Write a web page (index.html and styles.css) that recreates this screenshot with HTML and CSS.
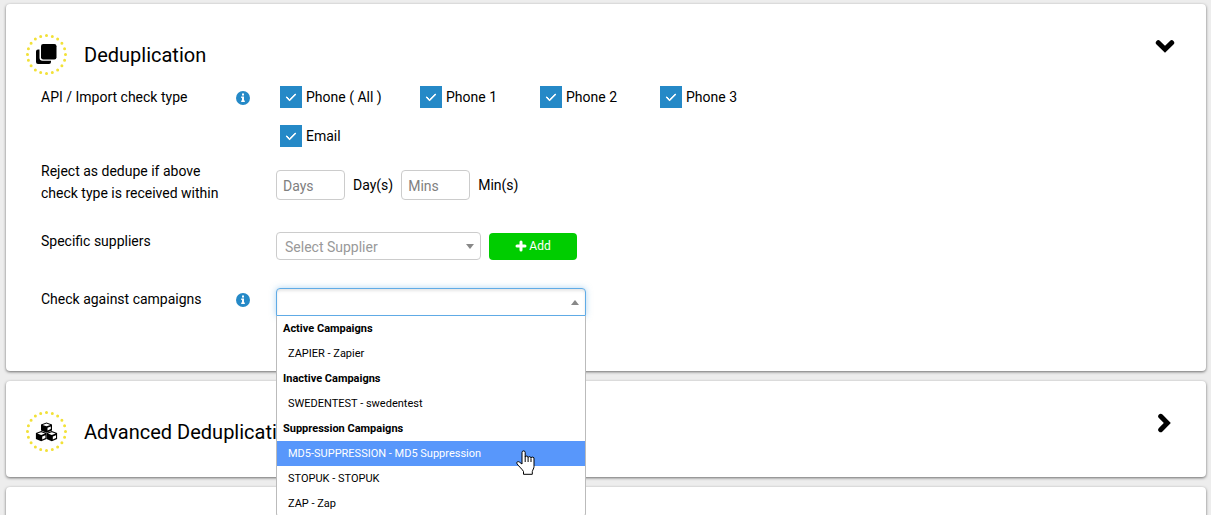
FILE: index.html
```html
<!DOCTYPE html>
<html lang="en">
<head>
    <meta charset="UTF-8">
    <meta name="viewport" content="width=device-width, initial-scale=1.0">
    <title>Campaign - Deduplication</title>
    <link rel="stylesheet" href="styles.css">
</head>
<body>
    <main class="page">

        <section class="panel">
            <header class="panel-header">
                <svg class="panel-icon" viewBox="0 0 41 41" aria-hidden="true">
                    <circle class="dots" cx="20.5" cy="20.5" r="19" pathLength="20" />
                    <path d="M12 15.5a2 2 0 0 0-2 2V28a2 2 0 0 0 2 2h11a2 2 0 0 0 2-2v-1.300H16.500a3 3 0 0 1-3-3v-8.200z" />
                    <rect x="15" y="10" width="15.500" height="15.500" rx="2.200" />
                </svg>
                <h2>Deduplication</h2>
                <button class="toggle" type="button" aria-label="Collapse">
                    <svg viewBox="0 0 20 20"><path d="M3.300 6.700 10 13.300l6.700-6.600" /></svg>
                </button>
            </header>

            <div class="form-row checks-row">
                <span class="row-label" id="check-type">API / Import check type</span>
                <svg class="info" viewBox="0 0 14 14" aria-hidden="true">
                    <circle cx="7" cy="7" r="7" />
                    <path d="M6 2.600h2v2H6zM5.200 5.600H8v4h.8V11H5.200V9.600H6V7h-.8z" />
                </svg>
                <div class="checks" role="group" aria-labelledby="check-type">
                    <label class="check"><input type="checkbox" checked> Phone ( All )</label>
                    <label class="check"><input type="checkbox" checked> Phone 1</label>
                    <label class="check"><input type="checkbox" checked> Phone 2</label>
                    <label class="check"><input type="checkbox" checked> Phone 3</label>
                    <label class="check"><input type="checkbox" checked> Email</label>
                </div>
            </div>

            <div class="form-row within-row">
                <span class="row-label">Reject as dedupe if above check type is received within</span>
                <div class="controls">
                    <input class="number" id="days" type="text" placeholder="Days">
                    <label for="days">Day(s)</label>
                    <input class="number" id="mins" type="text" placeholder="Mins">
                    <label for="mins">Min(s)</label>
                </div>
            </div>

            <div class="form-row supplier-row">
                <label class="row-label" for="supplier">Specific suppliers</label>
                <div class="controls">
                    <div class="select-box supplier">
                        <select id="supplier">
                            <option>Select Supplier</option>
                        </select>
                    </div>
                    <button class="add-btn" type="button">
                        <svg viewBox="0 0 12 12" aria-hidden="true"><path d="M6 2v8M2 6h8" /></svg>
                        Add
                    </button>
                </div>
            </div>

            <div class="form-row campaign-row">
                <label class="row-label" for="campaigns">Check against campaigns</label>
                <svg class="info" viewBox="0 0 14 14" aria-hidden="true">
                    <circle cx="7" cy="7" r="7" />
                    <path d="M6 2.600h2v2H6zM5.200 5.600H8v4h.8V11H5.200V9.600H6V7h-.8z" />
                </svg>
                <div class="controls">
                    <div class="select-box campaigns open">
                        <select id="campaigns">
                            <option></option>
                        </select>
                        <ul class="dropdown" role="listbox" aria-label="Campaigns">
                            <li class="group">Active Campaigns</li>
                            <li role="option">ZAPIER - Zapier</li>
                            <li class="group">Inactive Campaigns</li>
                            <li role="option">SWEDENTEST - swedentest</li>
                            <li class="group">Suppression Campaigns</li>
                            <li class="highlighted" role="option">
                                MD5-SUPPRESSION - MD5 Suppression
                                <svg class="pointer" viewBox="0 0 19 25" aria-hidden="true">
                                    <path d="M6 14V2.500a1.600 1.600 0 0 1 3.200 0V7a1.500 1.500 0 0 1 2.900.6 1.500 1.500 0 0 1 2.900.6 1.500 1.500 0 0 1 3 .8v7.500c0 2-1.200 3-1.700 5v2.800H7.500v-2.800C6.500 19.500 3 16.500 1 13.800c-.8-1.800.8-2.800 2.300-1.800z" />
                                    <path d="M9.200 6.500v5.500M12.100 7.500v4.500M15 8.500v3.500" />
                                </svg>
                            </li>
                            <li role="option">STOPUK - STOPUK</li>
                            <li role="option">ZAP - Zap</li>
                        </ul>
                    </div>
                </div>
            </div>
        </section>

        <section class="panel">
            <header class="panel-header">
                <svg class="panel-icon" viewBox="0 0 41 41" aria-hidden="true">
                    <circle class="dots" cx="20.5" cy="20.5" r="19" pathLength="20" />
                    <path d="M20.500 11.500 26 13.400V19.500L20.500 21.700 15 19.500v-6.100z" />
                    <path d="M15.200 20 20.500 22V28l-5.300 2.200L9.900 28v-6z" />
                    <path d="M25.800 20l5.300 2V28l-5.300 2.200-5.300-2.200v-6z" />
                    <path class="cube-lines" d="M16.600 13.900l3.900 1.400 3.900-1.400-3.900-1.300zM11.300 22.500l3.900 1.400 3.900-1.400-3.900-1.300zM21.900 22.500l3.900 1.400 3.900-1.400-3.900-1.300zM21.500 16.800v2.600l3.300-1.400v-2.500zM16.200 25.400v3l3.200-1.400v-2.800zM26.800 25.400v3l3.200-1.400v-2.800z" />
                </svg>
                <h2>Advanced Deduplication</h2>
                <button class="toggle" type="button" aria-label="Expand">
                    <svg viewBox="0 0 20 20"><path d="M5.700 3.300 12.300 10l-6.600 6.700" /></svg>
                </button>
            </header>
        </section>

        <section class="panel"></section>

    </main>
</body>
</html>
```

FILE: styles.css
```css
* {
    margin: 0;
    padding: 0;
    box-sizing: border-box;
}

body {
    font-family: Roboto, Arial, sans-serif;
    font-size: 14px;
    line-height: 22px;
    color: #000;
    background-color: #ededed;
}

input, select, button {
    font-family: inherit;
    font-size: 14px;
}

.page {
    display: flex;
    flex-direction: column;
    gap: 10px;
    height: 100vh;
    padding: 4px 5px 0 6px;
    overflow: hidden;
}

/* Panels */
.panel {
    flex-shrink: 0;
    min-height: 96px;
    padding: 30px 20px 25px;
    background-color: #fff;
    border-radius: 4px;
    box-shadow: 0 1px 3px rgba(0, 0, 0, 0.55);
}

.panel-header {
    display: flex;
    align-items: center;
    margin-bottom: 11px;
}

.panel:nth-child(2) .panel-header {
    margin-bottom: 0;
}

.panel-icon {
    width: 41px;
    height: 41px;
    margin-right: 17px;
}

.dots {
    fill: none;
    stroke: #f2e138;
    stroke-width: 3;
    stroke-linecap: round;
    stroke-dasharray: 0 1;
}

.cube-lines {
    fill: #fff;
}

.panel-header h2 {
    flex: 1;
    font-size: 20px;
    font-weight: 400;
    line-height: 24px;
}

.toggle {
    width: 20px;
    height: 20px;
    margin: 0 11px 18px 0;
    background: none;
    border: none;
    cursor: pointer;
}

.toggle svg {
    display: block;
    fill: none;
    stroke: #000;
    stroke-width: 5;
    stroke-linecap: round;
}

/* Form rows */
.form-row {
    display: grid;
    grid-template-columns: 195px 40px 1fr;
    align-items: start;
    padding-left: 15px;
}

.row-label {
    padding-right: 10px;
}

.info {
    width: 14px;
    height: 14px;
    margin-top: 5px;
    fill: #2589c7;
}

.info path {
    fill: #fff;
}

.controls {
    grid-column: 3;
    display: flex;
    align-items: center;
    gap: 8px;
}

.checks-row {
    min-height: 74px;
}

.within-row {
    min-height: 70px;
}

.within-row .controls {
    padding-top: 10px;
}

.supplier-row {
    min-height: 58px;
}

.supplier-row .controls {
    padding-top: 2px;
}

.campaign-row {
    min-height: 58px;
}

/* Checkboxes */
.checks {
    display: grid;
    grid-template-columns: 140px 120px 120px 120px;
    row-gap: 17px;
    padding-left: 4px;
}

.check {
    display: flex;
    align-items: center;
    gap: 4px;
}

.check input {
    appearance: none;
    display: grid;
    place-items: center;
    width: 22px;
    height: 22px;
    background-color: #2589c7;
}

.check input:checked::after {
    content: "";
    width: 8px;
    height: 4px;
    margin-bottom: 3px;
    border-left: 2px solid #fff;
    border-bottom: 2px solid #fff;
    border-radius: 1px;
    transform: rotate(-45deg);
}

/* Inputs */
.number {
    width: 69px;
    height: 30px;
    padding: 2px 6px 0;
    border: 1px solid #ccc;
    border-radius: 4px;
}

.number::placeholder {
    color: #808080;
}

.select-box {
    position: relative;
    height: 28px;
}

.select-box select {
    appearance: none;
    display: block;
    width: 100%;
    height: 28px;
    padding: 2px 20px 0 8px;
    color: #999;
    background-color: #fff;
    border: 1px solid #ccc;
    border-radius: 4px;
}

.select-box::after {
    content: "";
    position: absolute;
    top: 12px;
    right: 7px;
    border: 4px solid transparent;
    border-top: 5px solid #888;
    border-bottom: none;
}

.supplier {
    width: 205px;
}

.campaigns {
    width: 310px;
}

.open select {
    border-color: #5fabe6;
    border-radius: 4px 4px 0 0;
    box-shadow: 0 0 6px rgba(95, 171, 230, 0.5), inset 0 2px 3px rgba(0, 0, 0, 0.1);
}

.open::after {
    border-top: none;
    border-bottom: 5px solid #888;
}

.add-btn {
    display: flex;
    align-items: center;
    justify-content: center;
    gap: 2px;
    width: 88px;
    height: 27px;
    font-size: 12px;
    color: #fff;
    background-color: #00cd00;
    border: none;
    border-radius: 4px;
    cursor: pointer;
}

.add-btn svg {
    width: 12px;
    height: 12px;
    stroke: #fff;
    stroke-width: 3;
    stroke-linecap: round;
}

/* Campaign dropdown */
.dropdown {
    position: absolute;
    top: 28px;
    left: 0;
    z-index: 10;
    width: 100%;
    font-size: 11px;
    line-height: 25px;
    list-style: none;
    background-color: #fff;
    border: 1px solid #bbb;
    border-top: none;
    border-radius: 0 0 4px 4px;
}

.dropdown li {
    position: relative;
    height: 25px;
    padding-left: 11px;
}

.dropdown .group {
    padding-left: 6px;
    font-weight: 700;
}

.dropdown .highlighted {
    color: #fff;
    background-color: #5897fb;
}

.pointer {
    position: absolute;
    top: 9px;
    left: 239px;
    z-index: 1;
    width: 19px;
    height: 25px;
    fill: #fff;
    stroke: #000;
    stroke-linejoin: round;
}
```
